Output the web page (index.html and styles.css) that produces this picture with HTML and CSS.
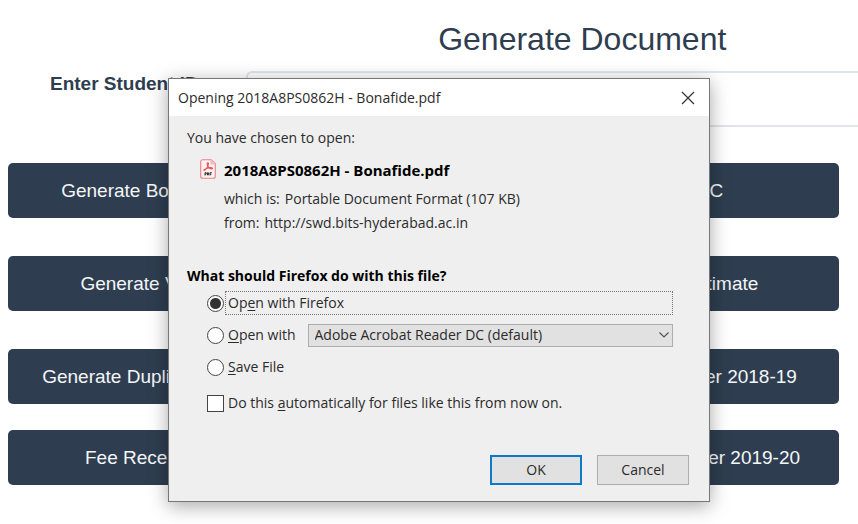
FILE: index.html
```html
<!DOCTYPE html>
<html lang="en">
<head>
<meta charset="utf-8">
<title>Generate Document</title>
<meta name="viewport" content="width=device-width, initial-scale=1">
<link rel="stylesheet" href="styles.css">
</head>
<body>
<main class="page">
  <div class="sheet">
    <h1 class="heading">Generate Document</h1>
    <div class="field">
      <label class="field-label" for="student">Enter Student ID</label>
      <input class="field-input" id="student" type="text">
    </div>
  </div>
  <div class="actions">
    <div class="actions-group">
      <div class="actions-row"><button class="action" type="button">Generate Bonafide</button><button class="action" type="button">LTC</button></div>
      <div class="actions-row"><button class="action" type="button">Generate Visa</button><button class="action" type="button">Bill Estimate</button></div>
      <div class="actions-row"><button class="action" type="button">Generate Duplicate IDs</button><button class="action" type="button">Grade Letter 2018-19</button></div>
    </div>
    <div class="actions-row"><button class="action" type="button">Fee Receipts</button><button class="action" type="button">Mentor Letter 2019-20</button></div>
  </div>
</main>

<section class="dialog" role="dialog" aria-labelledby="dialog-title">
  <header class="titlebar">
    <span id="dialog-title">Opening 2018A8PS0862H - Bonafide.pdf</span>
    <button class="close" type="button" aria-label="Close">
      <svg width="14" height="14" viewBox="0 0 14 14"><path d="M1 1l12 12M13 1L1 13" fill="none" stroke="#333" stroke-width="1.2"/></svg>
    </button>
  </header>
  <form class="content">
    <p class="intro">You have chosen to open:</p>
    <div class="file">
      <svg class="file-icon" width="16" height="20" viewBox="0 0 16 20">
        <path d="M2.5.7h8.7l4.1 4v12.600q0 2-2 2H2.700q-2 0-2-2V2.700q0-2 1.800-2z" fill="#fdf0f0" stroke="#ee7f84" stroke-width="1.1"/>
        <path d="M11 1v4h4" fill="#f8c9cb" stroke="#f3a0a4" stroke-width=".7"/>
        <path d="M7.800 3.800c-1.200.2-.7 2.200.2 3.600.9 1.300 2.400 2.500 3.800 2.500 1.300-.2.700-1.300-1.200-1.300-2.300 0-4.700.9-6.100 1.800-1.300.9-.4 1.600.7.5C6.700 9.400 8.300 6.500 8.500 4.900c.1-.7-.2-1.100-.7-1.100z" fill="none" stroke="#e9555c" stroke-width="1.1"/>
        <path d="M5 16.500v-2.800h1.200v1.500H5M7.500 13.700v2.300h.9v-2.300zM10 16.500v-2.800h1.800M10 15.200h1.400" fill="none" stroke="#333" stroke-width="1"/>
      </svg>
      <div class="file-info">
        <strong class="file-name">2018A8PS0862H - Bonafide.pdf</strong>
        <span class="file-line"><span>which is:</span><span>Portable Document Format (107 KB)</span></span>
        <span class="file-line"><span>from:</span><span>http://swd.bits-hyderabad.ac.in</span></span>
      </div>
    </div>
    <fieldset class="choices">
      <legend class="question">What should Firefox do with this file?</legend>
      <div class="choice">
        <input class="radio" type="radio" name="mode" id="firefox" checked>
        <label class="choice-label focused" for="firefox">Op<u>e</u>n with Firefox</label>
      </div>
      <div class="choice">
        <input class="radio" type="radio" name="mode" id="other">
        <label class="choice-label" for="other"><u>O</u>pen with</label>
        <div class="picker">
          <select class="select" aria-label="Application"><option>Adobe Acrobat Reader DC (default)</option></select>
          <svg class="chevron" width="12" height="8" viewBox="0 0 12 8"><path d="M1.500 1.500L6 6l4.500-4.500" fill="none" stroke="#555" stroke-width="1.200"/></svg>
        </div>
      </div>
      <div class="choice">
        <input class="radio" type="radio" name="mode" id="save">
        <label class="choice-label" for="save"><u>S</u>ave File</label>
      </div>
    </fieldset>
    <div class="choice remember">
      <input class="check" type="checkbox" id="auto">
      <label class="choice-label" for="auto">Do this <u>a</u>utomatically for files like this from now on.</label>
    </div>
    <div class="buttons">
      <button class="button primary" type="button">OK</button>
      <button class="button" type="button">Cancel</button>
    </div>
  </form>
</section>
</body>
</html>
```
FILE: styles.css
```css
* { box-sizing: border-box; }

body {
  margin: 0;
  background: #fff;
  color: #2e3e50;
  font: 19px/26px "Liberation Sans", Arial, sans-serif;
  overflow: hidden;
}

.page { padding: 20px 0 0 8px; overflow: hidden; }
.sheet { width: 137%; margin-left: -8px; }

.heading {
  margin: 0 0 13px;
  font-size: 32px;
  line-height: 38px;
  font-weight: 400;
  text-align: center;
}

.field { display: flex; align-items: flex-start; padding-left: 50px; }
.field-label { width: 196px; font-weight: 700; }
.field-input {
  flex: 1;
  height: 56px;
  border: 2px solid #e0e5ec;
  border-radius: 6px;
  background: #fff;
  font: inherit;
}

.actions {
  display: flex;
  flex-direction: column;
  gap: 26px;
  margin: 36px 19px 0 0;
}
.actions-group { display: flex; flex-direction: column; gap: 38px; }
.actions-row { display: flex; justify-content: space-between; }
.action {
  width: 32%;
  height: 55px;
  padding: 0;
  border: 0;
  border-radius: 5px;
  background: #2e3e50;
  color: #f4f6f8;
  font: inherit;
  white-space: nowrap;
}

.dialog {
  position: absolute;
  top: 78px;
  left: 168px;
  right: 148px;
  border: 1px solid #777;
  background: #efefef;
  color: #2b2b2b;
  font: 14px/24px "Open Sans", "Noto Sans", sans-serif;
  box-shadow: 0 4px 18px rgba(0, 0, 0, .35);
}

.titlebar {
  display: flex;
  align-items: center;
  justify-content: space-between;
  height: 37px;
  padding: 0 14px 0 9px;
  background: #fff;
}
.close { display: flex; padding: 0; border: 0; background: none; }

.content { padding: 10px 20px 16px 18px; }
.intro { margin: 0 0 8px; }

.file { display: flex; gap: 8px; padding-left: 13px; }
.file-icon { margin-top: 1px; }
.file-info { display: flex; flex-direction: column; }
.file-name { margin-bottom: 5px; color: #000; font-size: 15px; }
.file-line { display: flex; gap: 5px; }

.choices {
  display: flex;
  flex-direction: column;
  gap: 8px;
  margin: 29px 0 0;
  padding: 0 16px 0 20px;
  border: 0;
}
.question {
  margin: 0 0 3px -20px;
  padding: 0;
  color: #000;
  font-weight: 700;
}
.choice { display: flex; align-items: center; gap: 1px; min-height: 24px; }
.choice-label { padding: 0 2px; border: 1px solid transparent; line-height: 22px; }
.focused { flex: 1; border: 1px dotted #777; }
u { text-underline-offset: 2px; }

.radio, .check {
  appearance: none;
  flex: none;
  width: 17px;
  height: 17px;
  margin: 0;
  border: 1px solid #444;
  background: #fff;
}
.radio { border-radius: 50%; }
.radio:checked { background: radial-gradient(circle, #333 5px, #fff 6px); }

.picker { position: relative; flex: 1; margin-left: 8px; }
.select {
  display: block;
  appearance: none;
  width: 100%;
  height: 23px;
  padding: 0 24px 0 6px;
  border: 1px solid #adadad;
  border-radius: 0;
  background: #e1e1e1;
  color: inherit;
  font: inherit;
  line-height: 20px;
}
.chevron { position: absolute; top: 7px; right: 3px; pointer-events: none; }

.remember { margin-top: 12px; padding-left: 20px; }

.buttons { display: flex; justify-content: flex-end; gap: 15px; margin-top: 40px; }
.button {
  width: 92px;
  height: 30px;
  padding: 0;
  border: 1px solid #adadad;
  background: #e1e1e1;
  color: inherit;
  font: inherit;
}
.primary { border: 2px solid #0f78c8; }
```
